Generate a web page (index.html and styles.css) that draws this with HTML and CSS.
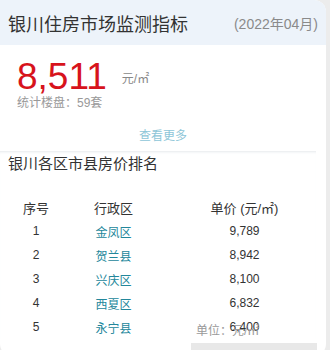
FILE: index.html
```html
<!DOCTYPE html>
<html lang="zh-CN">
<head>
<meta charset="utf-8">
<link rel="stylesheet" href="styles.css">
</head>
<body>
<div class="card">
  <div class="header">
    <span class="title">银川住房市场监测指标</span>
    <span class="date">(2022年04月)</span>
  </div>
  <div class="summary">
    <div class="price-line"><span class="price">8,511</span><span class="unit">元/㎡</span></div>
    <div class="stat">统计楼盘：59套</div>
  </div>
  <div class="more">查看更多</div>
  <div class="section">
    <div class="section-title">银川各区市县房价排名</div>
    <div class="table">
      <div class="row head"><span class="c1">序号</span><span class="c2">行政区</span><span class="c3">单价 (元/㎡)</span></div>
      <div class="row"><span class="c1">1</span><span class="c2 link">金凤区</span><span class="c3">9,789</span></div>
      <div class="row"><span class="c1">2</span><span class="c2 link">贺兰县</span><span class="c3">8,942</span></div>
      <div class="row"><span class="c1">3</span><span class="c2 link">兴庆区</span><span class="c3">8,100</span></div>
      <div class="row"><span class="c1">4</span><span class="c2 link">西夏区</span><span class="c3">6,832</span></div>
      <div class="row"><span class="c1">5</span><span class="c2 link">永宁县</span><span class="c3">6,400</span></div>
    </div>
  </div>
  <div class="note">单位：元/㎡</div>
  <div class="band"></div>
</div>
</body>
</html>
```
FILE: styles.css
```css
html, body {
  margin: 0;
  padding: 0;
}
body {
  background: #ececec;
  font-family: "Liberation Sans", "Noto Sans CJK SC", sans-serif;
  color: #333;
  height: 350px;
  overflow: hidden;
}
.card {
  position: relative;
  width: 326px;
  height: 356px;
  background: #fff;
  border-radius: 0 12px 12px 12px;
  overflow: hidden;
}
.header {
  height: 45px;
  background: #edf3fa;
  display: flex;
  align-items: center;
  justify-content: space-between;
  padding: 0 8px 0 8px;
}
.title {
  font-size: 18px;
  color: #333;
}
.date {
  font-size: 14px;
  color: #8a8a8a;
}
.summary {
  padding: 14px 0 0 17px;
}
.price-line {
  height: 36px;
  line-height: 36px;
  white-space: nowrap;
}
.price {
  font-size: 37px;
  line-height: 36px;
  color: #d7131c;
  vertical-align: top;
}
.unit {
  font-size: 12px;
  color: #888;
  margin-left: 15px;
  vertical-align: -1px;
}
.stat {
  font-size: 12px;
  line-height: 16px;
  color: #999;
}
.more {
  margin-top: 17px;
  font-size: 12px;
  line-height: 16px;
  text-align: center;
  color: #8ec6d8;
}
.section {
  margin-top: 7px;
  width: 316px;
  border-top: 1px solid #eef0f2;
  box-shadow: inset 0 2px 3px -2px #e6eaee;
  padding-top: 2px;
}
.section-title {
  font-size: 15px;
  line-height: 20px;
  padding-left: 8px;
  color: #333;
}
.table {
  margin-top: 21px;
  width: 326px;
}
.row {
  display: grid;
  grid-template-columns: 72px 91px 1fr;
  height: 24px;
  align-items: center;
  font-size: 12px;
  color: #333;
}
.row.head {
  font-size: 13px;
}
.c1, .c3 {
  text-align: center;
}
.c2 {
  text-align: center;
  padding-right: 8px;
}
.link {
  color: #23879b;
}
.note {
  position: absolute;
  left: 196px;
  top: 323px;
  font-size: 12px;
  line-height: 16px;
  color: #999;
}
.band {
  position: absolute;
  left: 191px;
  top: 343px;
  width: 126px;
  height: 12px;
  background: #e8e8e8;
}
```
